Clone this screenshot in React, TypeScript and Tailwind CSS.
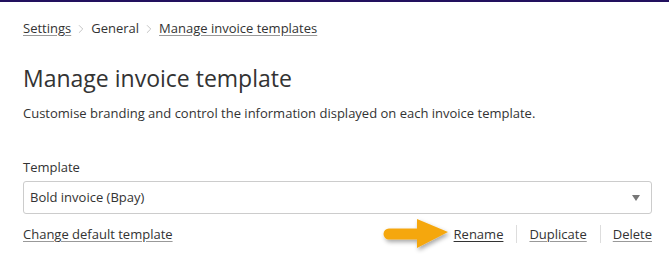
import { ChevronRight } from 'lucide-react'

function Arrow() {
  return (
    <svg width="70" height="40" viewBox="0 0 70 40" className="-my-3 mr-[3px] shrink-0">
      <defs>
        <filter id="sh" x="-20%" y="-30%" width="150%" height="180%">
          <feDropShadow dx="1.5" dy="2.5" stdDeviation="2" floodColor="#000" floodOpacity="0.35" />
        </filter>
      </defs>
      <g filter="url(#sh)">
        <line x1="8" y1="20" x2="38" y2="20" stroke="#f5a70f" strokeWidth="11" strokeLinecap="round" />
        <polygon points="36,5 36,34 67,18" fill="#f5a70f" />
      </g>
    </svg>
  )
}

export default function App() {
  return (
    <div className="w-[669px] h-[258px] bg-white border-t-2 border-[#22105e] font-['Open_Sans',sans-serif] text-[13px] text-[#333]">
      <div className="pl-[23px] pr-[17px]">
        {/* Breadcrumb */}
        <nav className="flex items-center gap-[3px] pt-[17px] h-[36px]">
          <a className="underline decoration-[#999] underline-offset-2">Settings</a>
          <ChevronRight size={14} strokeWidth={1.5} className="text-[#bbb]" />
          <span>General</span>
          <ChevronRight size={14} strokeWidth={1.5} className="text-[#bbb]" />
          <a className="underline decoration-[#999] underline-offset-2">Manage invoice templates</a>
        </nav>

        <h1 className="mt-[24px] text-[23px] leading-[32px] text-[#333]">Manage invoice template</h1>
        <p className="mt-[10px] leading-[18px]">
          Customise branding and control the information displayed on each invoice template.
        </p>

        {/* Template select */}
        <label className="block mt-[36px] leading-[18px]">Template</label>
        <div className="mt-[5px] h-[33px] border border-[#ccc] rounded-[3px] flex items-center justify-between pl-[6px] pr-[11px]">
          <span>Bold invoice (Bpay)</span>
          <svg width="8" height="6" viewBox="0 0 8 6">
            <polygon points="0,0 8,0 4,6" fill="#777" />
          </svg>
        </div>

        {/* Actions */}
        <div className="mt-[11px] flex items-center justify-between leading-[18px]">
          <a className="underline decoration-[#999] underline-offset-2">Change default template</a>
          <div className="flex items-center">
            <Arrow />
            <a className="underline decoration-[#333] underline-offset-2">Rename</a>
            <span className="ml-[13px] mr-[12px] w-px h-[18px] bg-[#ddd]" />
            <a className="underline decoration-[#999] underline-offset-2">Duplicate</a>
            <span className="ml-[13px] mr-[12px] w-px h-[18px] bg-[#ddd]" />
            <a className="underline decoration-[#999] underline-offset-2">Delete</a>
          </div>
        </div>
      </div>
    </div>
  )
}
